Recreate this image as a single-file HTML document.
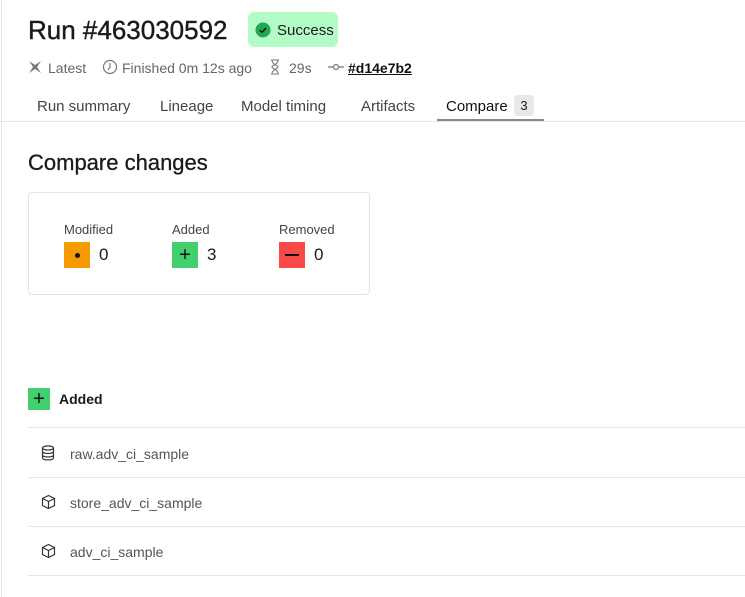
<!DOCTYPE html>
<html><head><style>
body{margin:0;width:745px;height:597px;background:#fff;font-family:"Liberation Sans",sans-serif;color:#1a1a1a;position:relative;overflow:hidden}
.a{position:absolute;white-space:nowrap}
.vl{position:absolute;left:1px;top:0;width:1px;height:597px;background:#e6e6e6}
h1{margin:0;font-size:26px;font-weight:500;position:absolute;left:28px;top:15px;-webkit-text-stroke:0.4px #1a1a1a}
.badge{left:248px;top:12px;width:90px;height:35px;background:#b3fcc7;border-radius:6px}
.meta{font-size:14px;color:#666;top:60px}
.tab{font-size:15px;color:#444;top:98px}
.hr{position:absolute;left:0;width:745px;height:1px;background:#e5e5e5}
.sq{position:absolute;width:26px;height:26px;display:flex;align-items:center;justify-content:center;font-size:20px;color:#111}
.row{font-size:14px;color:#555}
</style></head><body>
<div class="vl"></div>
<h1>Run #463030592</h1>
<div class="a badge"></div>
<svg class="a" style="left:255px;top:22px" width="16" height="16"><circle cx="8" cy="8" r="7.5" fill="#22a651"/><path d="M4.8 8.2l2.2 2.1 4-4.3" stroke="#111" stroke-width="1.4" fill="none"/></svg>
<div class="a" style="left:277px;top:22px;font-size:15px">Success</div>
<svg class="a" style="left:27px;top:59px" width="16" height="16"><path d="M2 2l6 4 6-4-4 6 4 6-6-4-6 4 4-6z" fill="#777"/></svg>
<div class="a meta" style="left:48px">Latest</div>
<svg class="a" style="left:102px;top:59px" width="16" height="16"><circle cx="8" cy="8" r="6.5" stroke="#777" fill="none" stroke-width="1.2"/><path d="M8 4v4l-2 3" stroke="#777" fill="none" stroke-width="1.2"/></svg>
<div class="a meta" style="left:122px">Finished 0m 12s ago</div>
<svg class="a" style="left:268px;top:59px" width="14" height="16"><path d="M3 1h8M3 15h8M4 1c0 5 6 5 6 7s-6 2-6 7M10 1c0 5-6 5-6 7s6 2 6 7" stroke="#777" fill="none" stroke-width="1.1"/></svg>
<div class="a meta" style="left:289px">29s</div>
<svg class="a" style="left:328px;top:61px" width="16" height="12"><path d="M0 6h5M11 6h5" stroke="#777" stroke-width="1.2"/><circle cx="8" cy="6" r="2.5" stroke="#777" fill="none" stroke-width="1.2"/></svg>
<div class="a meta" style="left:348px;color:#111;font-weight:bold;text-decoration:underline">#d14e7b2</div>
<div class="a tab" style="left:37px">Run summary</div>
<div class="a tab" style="left:160px">Lineage</div>
<div class="a tab" style="left:241px">Model timing</div>
<div class="a tab" style="left:361px">Artifacts</div>
<div class="a tab" style="left:446px;color:#111">Compare</div>
<div class="a" style="left:514px;top:95px;width:20px;height:21px;background:#e8e8e8;border-radius:4px;font-size:13px;text-align:center;line-height:21px">3</div>
<div class="a" style="left:437px;top:119px;width:107px;height:2px;background:#888"></div>
<div class="hr" style="top:121px"></div>
<div class="a" style="left:28px;top:150px;font-size:22px;font-weight:500;-webkit-text-stroke:0.3px #1a1a1a">Compare changes</div>
<div class="a" style="left:28px;top:192px;width:340px;height:101px;border:1px solid #e3e3e3;border-radius:4px"></div>
<div class="a" style="left:64px;top:222px;font-size:13px;color:#444">Modified</div>
<div class="a" style="left:172px;top:222px;font-size:13px;color:#444">Added</div>
<div class="a" style="left:279px;top:222px;font-size:13px;color:#444">Removed</div>
<div class="sq" style="left:64px;top:242px;background:#f59b00"><span style="width:5px;height:5px;border-radius:50%;background:#111"></span></div>
<div class="sq" style="left:172px;top:242px;background:#42d06f">+</div>
<div class="sq" style="left:279px;top:242px;background:#f84848"><span style="width:14px;height:2px;background:#111"></span></div>
<div class="a" style="left:99px;top:245px;font-size:17px">0</div>
<div class="a" style="left:207px;top:245px;font-size:17px">3</div>
<div class="a" style="left:314px;top:245px;font-size:17px">0</div>
<div class="sq" style="left:28px;top:388px;width:22px;height:22px;background:#42d06f">+</div>
<div class="a" style="left:59px;top:391px;font-size:14px;font-weight:bold">Added</div>
<div class="hr" style="left:28px;top:427px"></div>
<div class="hr" style="left:28px;top:477px"></div>
<div class="hr" style="left:28px;top:526px"></div>
<div class="hr" style="left:28px;top:575px"></div>
<svg class="a" style="left:41px;top:445px" width="14" height="16"><ellipse cx="7" cy="3" rx="5.5" ry="2" stroke="#333" fill="none" stroke-width="1.2"/><path d="M1.5 3v10c0 2.6 11 2.6 11 0V3M1.5 6.5c0 2.6 11 2.6 11 0M1.5 10c0 2.6 11 2.6 11 0" stroke="#333" fill="none" stroke-width="1.2"/></svg>
<div class="a row" style="left:70px;top:446px">raw.adv_ci_sample</div>
<svg class="a" style="left:41px;top:494px" width="15" height="16"><path d="M7.5 1.5l6 3v7l-6 3-6-3v-7zM1.5 4.5l6 3 6-3M7.5 7.5v7" stroke="#333" fill="none" stroke-width="1.2"/></svg>
<div class="a row" style="left:70px;top:495px">store_adv_ci_sample</div>
<svg class="a" style="left:41px;top:543px" width="15" height="16"><path d="M7.5 1.5l6 3v7l-6 3-6-3v-7zM1.5 4.5l6 3 6-3M7.5 7.5v7" stroke="#333" fill="none" stroke-width="1.2"/></svg>
<div class="a row" style="left:70px;top:544px">adv_ci_sample</div>
</body></html>
